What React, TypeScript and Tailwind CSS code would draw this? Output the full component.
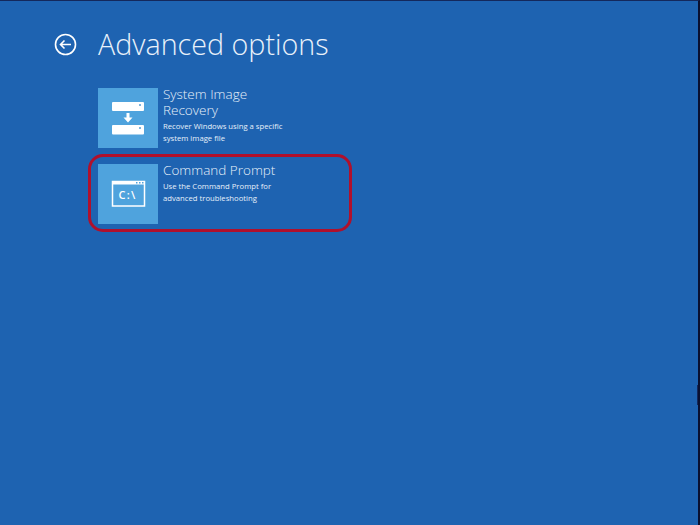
import React from 'react'

function RecoveryIcon() {
  return (
    <svg width="60" height="60" viewBox="0 0 60 60" fill="none">
      <rect x="14" y="14" width="32" height="9" rx="1" fill="#fff" />
      <rect x="14" y="37" width="32" height="9.500" rx="1" fill="#fff" />
      <rect x="41" y="16" width="2" height="2" fill="#7fb4de" />
      <rect x="41" y="39" width="2" height="2" fill="#7fb4de" />
      <path d="M28.5 25h3v4.500h3l-4.500 5-4.500-5h3z" fill="#fff" />
    </svg>
  )
}

function PromptIcon() {
  return (
    <svg width="60" height="60" viewBox="0 0 60 60" fill="none">
      <rect x="14.500" y="17.500" width="32" height="24.500" stroke="#fff" strokeWidth="1.500" />
      <rect x="14" y="17" width="33" height="3.500" fill="#fff" />
      <rect x="38" y="18" width="1.500" height="1.500" fill="#4fa3dd" />
      <rect x="41" y="18" width="1.500" height="1.500" fill="#4fa3dd" />
      <rect x="44" y="18" width="1.500" height="1.500" fill="#4fa3dd" />
      <text x="29.500" y="35" textAnchor="middle" fill="#fff" fontSize="11" fontWeight="600" letterSpacing="1.200" fontFamily="'Open Sans', sans-serif">C:\</text>
    </svg>
  )
}

function Option({ title, lines, icon }: { title: string[]; lines: string[]; icon: React.ReactNode }) {
  return (
    <div className="flex h-[60px] w-[254px] gap-[5px]">
      <div className="h-[60px] w-[60px] shrink-0 bg-[#4fa3dd]">{icon}</div>
      <div className="-mt-[2px]">
        {title.map(t => (
          <div key={t} className="text-[13.500px] font-light leading-[16px] text-[#e6f0fa]">{t}</div>
        ))}
        <div className="mt-[1.500px]">
          {lines.map(l => (
            <div key={l} className="text-[7.700px] leading-[12px] text-[#e6f0fa]">{l}</div>
          ))}
        </div>
      </div>
    </div>
  )
}

export default function App() {
  return (
    <div className="relative box-border h-[525px] w-[700px] overflow-hidden border-t border-r-2 border-t-[#14285c] border-r-[#0a1030] bg-[#1e63b1] font-['Open_Sans',sans-serif]">
      <div className="flex items-center pl-[54px] pt-[25px]">
        <svg width="23" height="23" viewBox="0 0 23 23" fill="none" stroke="#fff">
          <circle cx="11.500" cy="11.500" r="10" strokeWidth="1.600" />
          <path d="M17 11.500H6.500M10.500 7.500l-4 4 4 4" strokeWidth="1.600" />
        </svg>
        <h1 className="ml-[21px] text-[28.700px] font-light leading-[36px] text-[#e9f1fa]">Advanced options</h1>
      </div>

      <div className="flex flex-col gap-4 pl-[98px] pt-[26px]">
        <Option
          title={['System Image', 'Recovery']}
          lines={['Recover Windows using a specific', 'system image file']}
          icon={<RecoveryIcon />}
        />
        <Option
          title={['Command Prompt']}
          lines={['Use the Command Prompt for', 'advanced troubleshooting']}
          icon={<PromptIcon />}
        />
      </div>

      {/* red highlight drawn over the second option */}
      <div className="absolute left-[88px] top-[153px] h-[78px] w-[264px] rounded-[15px] border-[3px] border-[#b0102c]" />
      {/* notch on the right edge of the capture */}
      <div className="absolute right-0 top-[384px] h-[20px] w-px bg-[#14285c]" />
    </div>
  )
}
